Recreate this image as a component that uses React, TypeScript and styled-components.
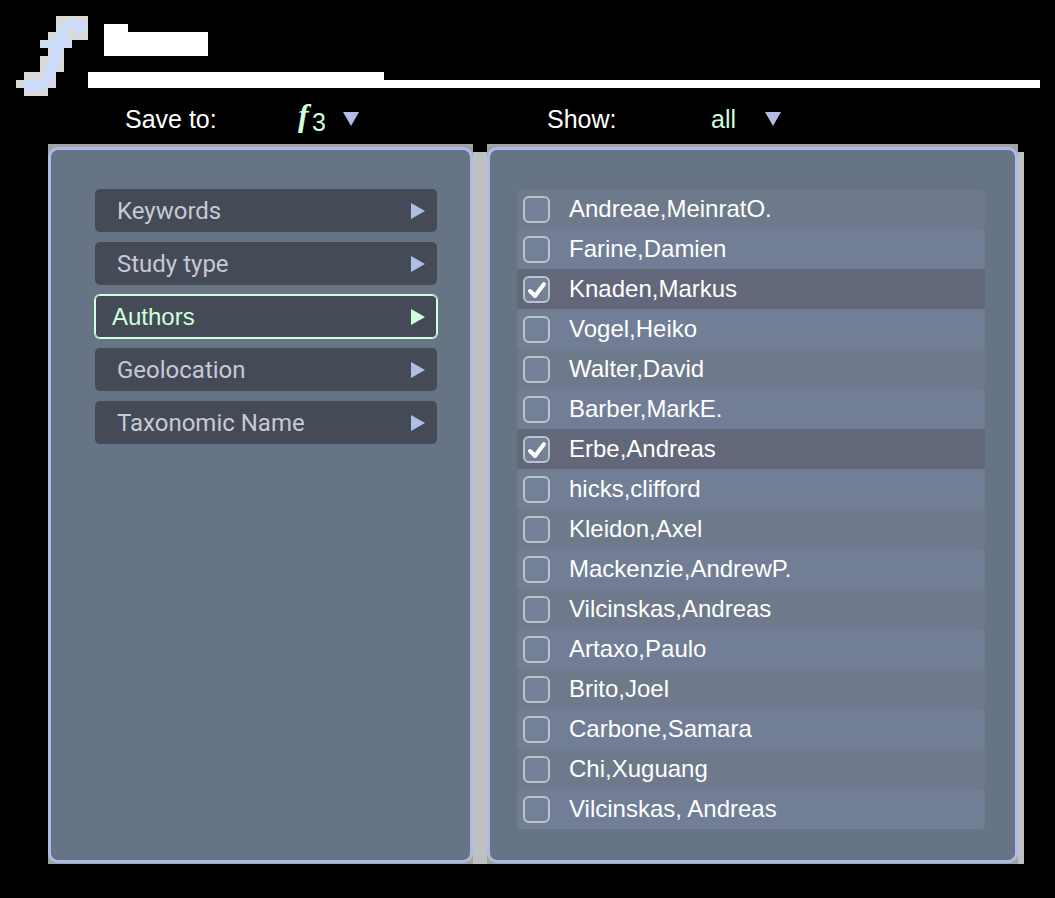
import React, { useState } from "react";
import styled, { createGlobalStyle } from "styled-components";

const GlobalStyle = createGlobalStyle`
  * { box-sizing: border-box; }
  body {
    margin: 0;
    background: #000;
    color: #fff;
    font-family: "Liberation Sans", Arial, sans-serif;
    font-size: 24px;
    line-height: 28px;
  }
`;

const Header = styled.header`
  display: flex;
  padding: 16px 15px 0 16px;
`;

const Brand = styled.div`
  flex: 1;
  min-width: 0;
  display: flex;
  flex-direction: column;
  padding-top: 8px;
`;

const Wordmark = styled.svg`
  display: block;
  margin: 0 0 16px 16px;
`;

const RuleTab = styled.div`
  width: 296px;
  height: 8px;
  background: #fff;
`;

const Rule = styled.div`
  height: 8px;
  background: #fff;
`;

const Toolbar = styled.div`
  display: grid;
  grid-template-columns: minmax(0, 425fr) minmax(0, 531fr);
  column-gap: 14px;
  height: 48px;
  padding: 0 37px 0 48px;
  font-size: 25px;
`;

const Field = styled.div<{ $inset: number }>`
  display: flex;
  align-items: center;
  height: 46px;
  padding-left: ${(p) => p.$inset}px;
`;

const FieldLabel = styled.label<{ $width: number }>`
  width: ${(p) => p.$width}px;
`;

const Picker = styled.div<{ $width: number }>`
  display: grid;
  grid-template-columns: minmax(0, 1fr) auto;
  align-items: center;
  width: ${(p) => p.$width}px;
  color: #d0ffdc;
`;

const PickerValue = styled.div`
  display: flex;
  align-items: center;
`;

const Symbol = styled.span`
  width: 18px;
  padding-bottom: 8px;
  font-family: "Liberation Serif", "Times New Roman", serif;
  font-size: 32px;
  font-style: italic;
  font-weight: bold;
  text-indent: 4px;
`;

const Select = styled.select<{ $lowered?: boolean }>`
  appearance: none;
  flex: 1;
  min-width: 0;
  margin: 0;
  padding: ${(p) => (p.$lowered ? "6px 0 0" : "0")};
  border: 0;
  background: transparent;
  color: inherit;
  font: inherit;
  option { color: #000; }
`;

const Main = styled.main`
  display: grid;
  grid-template-columns: minmax(0, 425fr) minmax(0, 531fr);
  column-gap: 14px;
  margin: 0 31px 34px 48px;
  padding-right: 6px;
  background: linear-gradient(#000 8px, #c0c0c0 8px);
`;

const PanelEdge = styled.div`
  display: flex;
  padding: 3px 0 1px;
  background: #a3a3a3;
`;

const Panel = styled.section<{ $pad: string }>`
  flex: 1;
  min-width: 0;
  padding: ${(p) => p.$pad};
  border: 3px solid #adbce6;
  border-radius: 10px;
  background: #677485;
`;

const Menu = styled.nav`
  display: flex;
  flex-direction: column;
  gap: 10px;
`;

const MenuButton = styled.button<{ $active: boolean }>`
  display: flex;
  align-items: center;
  justify-content: space-between;
  height: 43px;
  padding: 0 12px 0 ${(p) => (p.$active ? 17 : 22)}px;
  border: 0;
  border-radius: 5px;
  background: #444b57;
  color: ${(p) => (p.$active ? "#d0ffdc" : "#c5cad5")};
  font-family: ${(p) => (p.$active ? '"Liberation Sans", Arial' : "Roboto")}, sans-serif;
  font-size: 24px;
  line-height: 28px;
  text-align: left;
  box-shadow: ${(p) => (p.$active ? "0 0 0 1px #d0ffdc, inset 0 0 0 1px #d0ffdc" : "none")};
`;

const ArrowRight = styled.svg<{ $active: boolean }>`
  display: block;
  fill: ${(p) => (p.$active ? "#d0ffdc" : "#afbee3")};
`;

const ArrowDown = styled.svg`
  display: block;
  fill: #b3bce4;
`;

const List = styled.ul`
  margin: 0;
  padding: 0;
  list-style: none;
`;

const Row = styled.li<{ $checked: boolean }>`
  height: 40px;
  border-radius: 4px;
  background: ${(p) => (p.$checked ? "#626879" : "#6e7a8b")};
  &:nth-child(even) { background: ${(p) => (p.$checked ? "#626879" : "#717e95")}; }
`;

const RowLabel = styled.label`
  display: flex;
  align-items: center;
  gap: 19px;
  height: 40px;
  padding-left: 6px;
`;

const CheckCell = styled.span`
  display: grid;
  width: 27px;
  height: 27px;
  > * { grid-area: 1 / 1; }
`;

const Checkbox = styled.input`
  appearance: none;
  width: 27px;
  height: 27px;
  margin: 0;
  border: 2px solid #b9c5c8;
  border-radius: 6px;
  background: #748098;
`;

const Tick = styled.svg`
  z-index: 1;
  pointer-events: none;
`;

const categories = ["Keywords", "Study type", "Authors", "Geolocation", "Taxonomic Name"];

const authors = [
  "Andreae,MeinratO.",
  "Farine,Damien",
  "Knaden,Markus",
  "Vogel,Heiko",
  "Walter,David",
  "Barber,MarkE.",
  "Erbe,Andreas",
  "hicks,clifford",
  "Kleidon,Axel",
  "Mackenzie,AndrewP.",
  "Vilcinskas,Andreas",
  "Artaxo,Paulo",
  "Brito,Joel",
  "Carbone,Samara",
  "Chi,Xuguang",
  "Vilcinskas, Andreas",
];

function Logo() {
  return (
    <svg width="72" height="80" viewBox="0 0 72 80" aria-hidden="true">
      <path
        fill="#dadada"
        d="M40 0H72V24H56V32H48V56H40V72H32V80H8V72H0V64H8V56H24V40H32V32H24V24H32V16H40Z"
      />
      <g fill="none" stroke="#ccdcff" strokeLinecap="round">
        <path strokeWidth="6" d="M66 8C58 4 50 7 46 18" />
        <path strokeWidth="11" d="M47 15C42 27 40 41 35 54" />
        <path strokeWidth="9" d="M36 50C33 66 28 72 16 71" />
        <path strokeWidth="6" strokeLinecap="butt" d="M25 28H56" />
      </g>
      <circle cx="64" cy="11" r="7" fill="#ccdcff" />
      <circle cx="15" cy="69" r="7" fill="#ccdcff" />
    </svg>
  );
}

function DownIcon() {
  return (
    <ArrowDown width="16" height="14" viewBox="0 0 16 14" aria-hidden="true">
      <path d="M0 0H16L8 14Z" />
    </ArrowDown>
  );
}

export default function App() {
  const [category, setCategory] = useState("Authors");
  const [checked, setChecked] = useState<number[]>([2, 6]);

  const toggle = (index: number) =>
    setChecked((now) => (now.includes(index) ? now.filter((i) => i !== index) : [...now, index]));

  return (
    <>
      <GlobalStyle />
      <Header>
        <Logo />
        <Brand>
          <Wordmark width="104" height="32" viewBox="0 0 104 32" aria-hidden="true">
            <path fill="#fff" d="M0 0H24V8H104V32H0Z" />
          </Wordmark>
          <RuleTab />
          <Rule />
        </Brand>
      </Header>

      <Toolbar>
        <Field $inset={77}>
          <FieldLabel htmlFor="save-to" $width={169}>Save to:</FieldLabel>
          <Picker $width={65}>
            <PickerValue>
              <Symbol>f</Symbol>
              <Select id="save-to" $lowered defaultValue="3">
                <option>1</option>
                <option>2</option>
                <option>3</option>
              </Select>
            </PickerValue>
            <DownIcon />
          </Picker>
        </Field>
        <Field $inset={60}>
          <FieldLabel htmlFor="show" $width={164}>Show:</FieldLabel>
          <Picker $width={70}>
            <Select id="show" defaultValue="all">
              <option>all</option>
            </Select>
            <DownIcon />
          </Picker>
        </Field>
      </Toolbar>

      <Main>
        <PanelEdge>
          <Panel $pad="39px 33px 39px 44px">
            <Menu>
              {categories.map((name) => (
                <MenuButton
                  key={name}
                  type="button"
                  $active={name === category}
                  onClick={() => setCategory(name)}
                >
                  {name}
                  <ArrowRight
                    $active={name === category}
                    width="14"
                    height="16"
                    viewBox="0 0 14 16"
                    aria-hidden="true"
                  >
                    <path d="M0 0L14 8L0 16Z" />
                  </ArrowRight>
                </MenuButton>
              ))}
            </Menu>
          </Panel>
        </PanelEdge>
        <PanelEdge>
          <Panel $pad="39px 30px 31px 27px">
            <List>
              {authors.map((name, index) => {
                const on = checked.includes(index);
                return (
                  <Row key={name} $checked={on}>
                    <RowLabel>
                      <CheckCell>
                        <Checkbox type="checkbox" checked={on} onChange={() => toggle(index)} />
                        {on && (
                          <Tick width="27" height="27" viewBox="0 0 27 27" aria-hidden="true">
                            <path
                              d="M7 15L12 20L21 8"
                              fill="none"
                              stroke="#fff"
                              strokeWidth="4"
                              strokeLinecap="round"
                              strokeLinejoin="round"
                            />
                          </Tick>
                        )}
                      </CheckCell>
                      <span>{name}</span>
                    </RowLabel>
                  </Row>
                );
              })}
            </List>
          </Panel>
        </PanelEdge>
      </Main>
    </>
  );
}
